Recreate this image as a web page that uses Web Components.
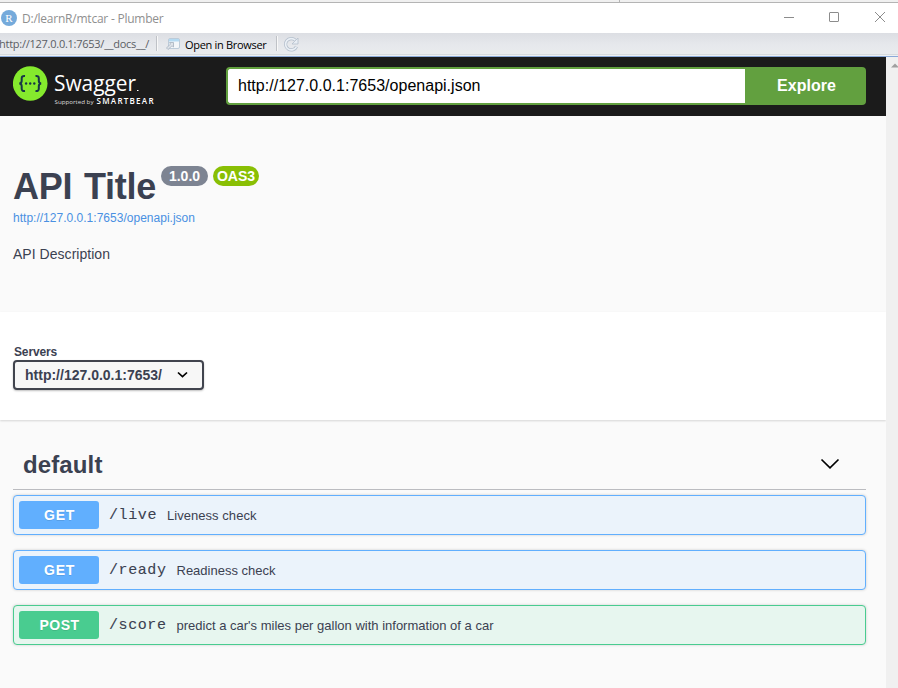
<!DOCTYPE html>
<html lang="en">
<head>
<meta charset="utf-8">
<title>Plumber</title>
<style>
body{margin:0;width:898px;height:688px;overflow:hidden;font-family:"Liberation Sans",Arial,sans-serif;color:#3b4151}
</style>
</head>
<body>
<plumber-window></plumber-window>
<script>
const define = (name, html, setup) => customElements.define(name, class extends HTMLElement {
  connectedCallback() {
    if (this.shadowRoot) return;
    this.attachShadow({ mode: 'open' }).innerHTML = html;
    if (setup) setup(this, this.shadowRoot);
  }
});

/* A run of text whose tracking is adjusted to fill a given width. */
define('fit-text', `<style>:host{display:inline-block;white-space:pre;flex:none}span{display:inline-block}</style><span><slot></slot></span>`, (host, root) => {
  const span = root.querySelector('span');
  const target = parseFloat(host.getAttribute('width'));
  const natural = span.getBoundingClientRect().width;
  span.style.letterSpacing = ((target - natural) / host.textContent.length) + 'px';
});

define('title-bar', `<style>
:host{display:flex;align-items:center;height:30px;background:#fff;border-top:1px solid #b4b4b4;color:#8f8f8f;font:12px "Open Sans","Noto Sans",sans-serif}
.logo{flex:none;margin:0 5px 0 1px}
fit-text{flex:1}
.controls{flex:none}
</style>
<svg class="logo" width="16" height="16" viewBox="0 0 16 16"><circle cx="8" cy="8" r="8" fill="#75aadb"/><text x="8" y="11.8" text-anchor="middle" font-family="Liberation Serif" font-size="11" fill="#fff">R</text></svg>
<fit-text width="141.500">D:/learnR/mtcar - Plumber</fit-text>
<svg class="controls" width="120" height="30" fill="none" stroke="#8c8c8c"><path d="M6 14.5h10"/><rect x="51.500" y="9.500" width="9" height="9" rx=".5"/><path d="M97 9l10 10M107 9l-10 10"/></svg>`);

define('tool-bar', `<style>
:host{display:flex;align-items:center;height:21px;background:linear-gradient(#dcdee3,#e6e8ec 55%,#e9ebee);border-bottom:1px solid #d6dade;font:11px "Open Sans","Noto Sans",sans-serif;color:#5a5d63}
i{width:1px;height:15px;background:#bfc2c7;border-right:1px solid #f8f8f8;flex:none}
.address{margin-left:-1px}
.open{color:#000;margin-left:4px;padding-top:1px}
svg{flex:none}
</style>
<fit-text class="address" width="150">http://127.0.0.1:7653/__docs__/</fit-text>
<i style="margin-left:7px"></i>
<svg style="margin-left:6px" width="17" height="16" viewBox="0 0 17 16"><rect x="4.500" y="2.500" width="11" height="10" rx="1.500" fill="#f3f6f9" stroke="#bccbd9"/><path d="M5 3h10v2.500H5z" fill="#b4daf2"/><path d="M2.500 12l4-4L5.500 6.500H9.500v4.500L8 9.800l-4 3.700z" fill="#dfe4ea" stroke="#a5b0be" stroke-width=".8"/></svg>
<fit-text class="open" width="81.500">Open in Browser</fit-text>
<i style="margin-left:9px"></i>
<svg style="margin-left:5px" width="17" height="16" viewBox="0 0 17 16"><path d="M12.300 4.200A5.700 5.700 0 1 0 13.500 10.500" fill="none" stroke="#b4bfcc" stroke-width="3.200"/><path d="M12.300 4.200A5.700 5.700 0 1 0 13.500 10.500" fill="none" stroke="#ebf0f6" stroke-width="1.700"/><path d="M15 2v6H9z" fill="#e8edf4" stroke="#b4bfcc" stroke-width=".8"/></svg>`);

define('swagger-logo', `<style>:host{display:block;width:150px;height:44px}</style>
<svg width="150" height="44" viewBox="0 0 150 44"><circle cx="17.200" cy="18.500" r="17.300" fill="#85ea2d"/>
<g fill="none" stroke="#173647" stroke-width="2" transform="translate(0 .5)"><path d="M12 10.500q-3.300-.4-3.300 2.300v2.500q0 2.600-2.400 2.700 2.400.1 2.400 2.700v2.500q0 2.700 3.300 2.300M22.500 10.500q3.300-.4 3.300 2.300v2.500q0 2.600 2.400 2.700-2.400.1-2.400 2.700v2.500q0 2.700-3.300 2.300"/></g>
<g fill="#173647"><circle cx="13.100" cy="18.500" r="1.200"/><circle cx="17.200" cy="18.500" r="1.200"/><circle cx="21.300" cy="18.500" r="1.200"/></g>
<g fill="#fff" font-family="Open Sans"><text x="41" y="26" font-size="22" textLength="82" lengthAdjust="spacingAndGlyphs">Swagger</text><path d="M124 25h1.500v1H124z"/>
<text x="41.500" y="39" font-size="6" textLength="39" lengthAdjust="spacingAndGlyphs" fill="#ddd">Supported by</text><text x="83.500" y="39" font-size="8" font-weight="600" textLength="57">SMARTBEAR</text></g></svg>`);

define('swagger-topbar', `<style>
:host{display:flex;align-items:center;height:59px;background:#1b1b1b;border-top:1px solid #8aa9d8;padding:0 20px 0 13px;justify-content:space-between}
form{display:flex;width:640px;height:38px;margin:0 0 2px}
.url{flex:1;box-sizing:border-box;border:2px solid #62a03f;border-right:0;border-radius:4px 0 0 4px;background:#fff;color:#000;font-size:16px;line-height:34px;padding-left:10px}
button{width:121px;border:0;border-radius:0 4px 4px 0;background:#62a03f;color:#fff;font:bold 16px "Liberation Sans",Arial,sans-serif;padding:0 0 0 2px}
</style>
<swagger-logo></swagger-logo>
<form><div class="url"><fit-text width="242.500">http://127.0.0.1:7653/openapi.json</fit-text></div><button type="button"><fit-text width="59">Explore</fit-text></button></form>`);

define('version-badge', `<style>:host{display:flex;align-items:center;justify-content:center;height:20px;border-radius:10px;background:var(--badge,#7d8492);color:#fff;font-weight:bold;font-size:14px;line-height:20px}</style><slot></slot>`);

define('api-info', `<style>
:host{display:block;height:196px;box-sizing:border-box;padding:50px 13px 0}
.head{display:flex;align-items:flex-start}
h1{margin:0 5px 0 0;font-size:36px;line-height:41px;word-spacing:2px}
version-badge{width:47px}
.oas{width:46px;margin-left:5px;--badge:#89bf04}
a{display:block;font-size:12px;line-height:14px;color:#4990e2;margin-top:4px}
p{margin:20px 0 0;font-size:14px;line-height:18px}
</style>
<div class="head"><h1><fit-text width="143">API Title</fit-text></h1><version-badge><fit-text width="31">1.0.0</fit-text></version-badge><version-badge class="oas"><fit-text width="38">OAS3</fit-text></version-badge></div>
<a><fit-text width="182">http://127.0.0.1:7653/openapi.json</fit-text></a><p><fit-text width="97">API Description</fit-text></p>`);

define('server-select', `<style>
:host{display:block;height:108px;box-sizing:border-box;background:#fff;padding:33px 13px 0;box-shadow:0 1px 2px rgba(0,0,0,.15)}
label{display:block;font-size:12px;font-weight:bold;line-height:14px;padding-left:1px;margin-bottom:1px}
.select{display:flex;align-items:center;box-sizing:border-box;width:191px;height:30px;border:2px solid #41444e;border-radius:4px;background:#f7f7f7;box-shadow:0 1px 2px rgba(0,0,0,.25);padding:0 14px 0 10px;justify-content:space-between;font-size:14px;font-weight:bold}
</style>
<label><fit-text width="43">Servers</fit-text></label>
<div class="select"><fit-text width="137">http://127.0.0.1:7653/</fit-text><svg width="11" height="8" fill="none" stroke="#000" stroke-width="1.700"><path d="M1 1.500l4.500 4.200L10 1.500"/></svg></div>`);

define('operation-row', `<style>
:host{--c:#61affe;--bg:#ebf3fb;display:flex;align-items:center;box-sizing:border-box;height:40px;border:1px solid var(--c);border-radius:4px;background:var(--bg);box-shadow:0 0 3px rgba(0,0,0,.19);padding:0 5px}
:host([method=POST]){--c:#49cc90;--bg:#e7f6ef}
b{width:79px;padding-left:1px;height:28px;line-height:28px;border-radius:3px;background:var(--c);color:#fff;font-size:14px;text-align:center;text-shadow:0 1px rgba(0,0,0,.1);margin-right:10px}
code{font:15px/18px "Courier New","Liberation Mono",monospace;-webkit-text-stroke:.1px;margin-right:10px}
.code{display:flex;padding-top:2px}
.desc{font-size:13px;line-height:16px;padding-top:1px}
</style><b></b><div class="code"></div><div class="desc"></div>`, (host, root) => {
  const a = n => host.getAttribute(n);
  root.querySelector('b').innerHTML = `<fit-text width="${a('mw')}">${a('method')}</fit-text>`;
  root.querySelector('.code').innerHTML = `<code><fit-text width="${a('pw')}">${a('path')}</fit-text></code>`;
  root.querySelector('.desc').innerHTML = `<fit-text width="${a('dw')}">${a('desc')}</fit-text>`;
});

define('operation-group', `<style>
:host{display:flex;flex-direction:column;gap:15px;padding:25px 20px 0 13px}
header{display:flex;align-items:center;justify-content:space-between;height:44px;padding:0 26px 0 10px;border-bottom:1px solid #bbbcc0;margin-bottom:-10px}
h2{margin:0;font-size:24px;line-height:28px;padding-bottom:4px}
svg{margin-bottom:6px}
</style>
<header><h2><fit-text width="79.500">default</fit-text></h2><svg width="20" height="12" fill="none" stroke="#000" stroke-width="1.700"><path d="M1.500 1.500l8.500 8.300 8.500-8.300"/></svg></header><slot></slot>`);

define('plumber-window', `<style>
:host{display:block;height:688px;overflow:hidden;background:#fff}
.behind{display:flex;height:2px;background:#f0f0f0}
.behind i{width:1px;margin-left:619px;background:#b4b4b4}
.gap{height:1px;background:#eef0f2}
.view{display:flex;height:632px}
main{width:886px;background:#fafafa}
aside{flex:1;background:#f0f0f0;border-top:1px solid #8aa9d8;overflow:hidden}
aside svg{display:block;margin:6px 0 0 5px}
</style>
<div class="behind"><i></i></div><title-bar></title-bar><tool-bar></tool-bar><div class="gap"></div>
<div class="view"><main><swagger-topbar></swagger-topbar><api-info></api-info><server-select></server-select>
<operation-group>
<operation-row method="GET" path="/live" desc="Liveness check" mw="31" pw="48" dw="89.500"></operation-row>
<operation-row method="GET" path="/ready" desc="Readiness check" mw="31" pw="57.500" dw="99"></operation-row>
<operation-row method="POST" path="/score" desc="predict a car's miles per gallon with information of a car" mw="40" pw="57.500" dw="317"></operation-row>
</operation-group></main><aside><svg width="8" height="5"><path d="M0 4.500L4 .5l4 4z" fill="#a0a0a0"/></svg></aside></div>`);
</script>
</body>
</html>
